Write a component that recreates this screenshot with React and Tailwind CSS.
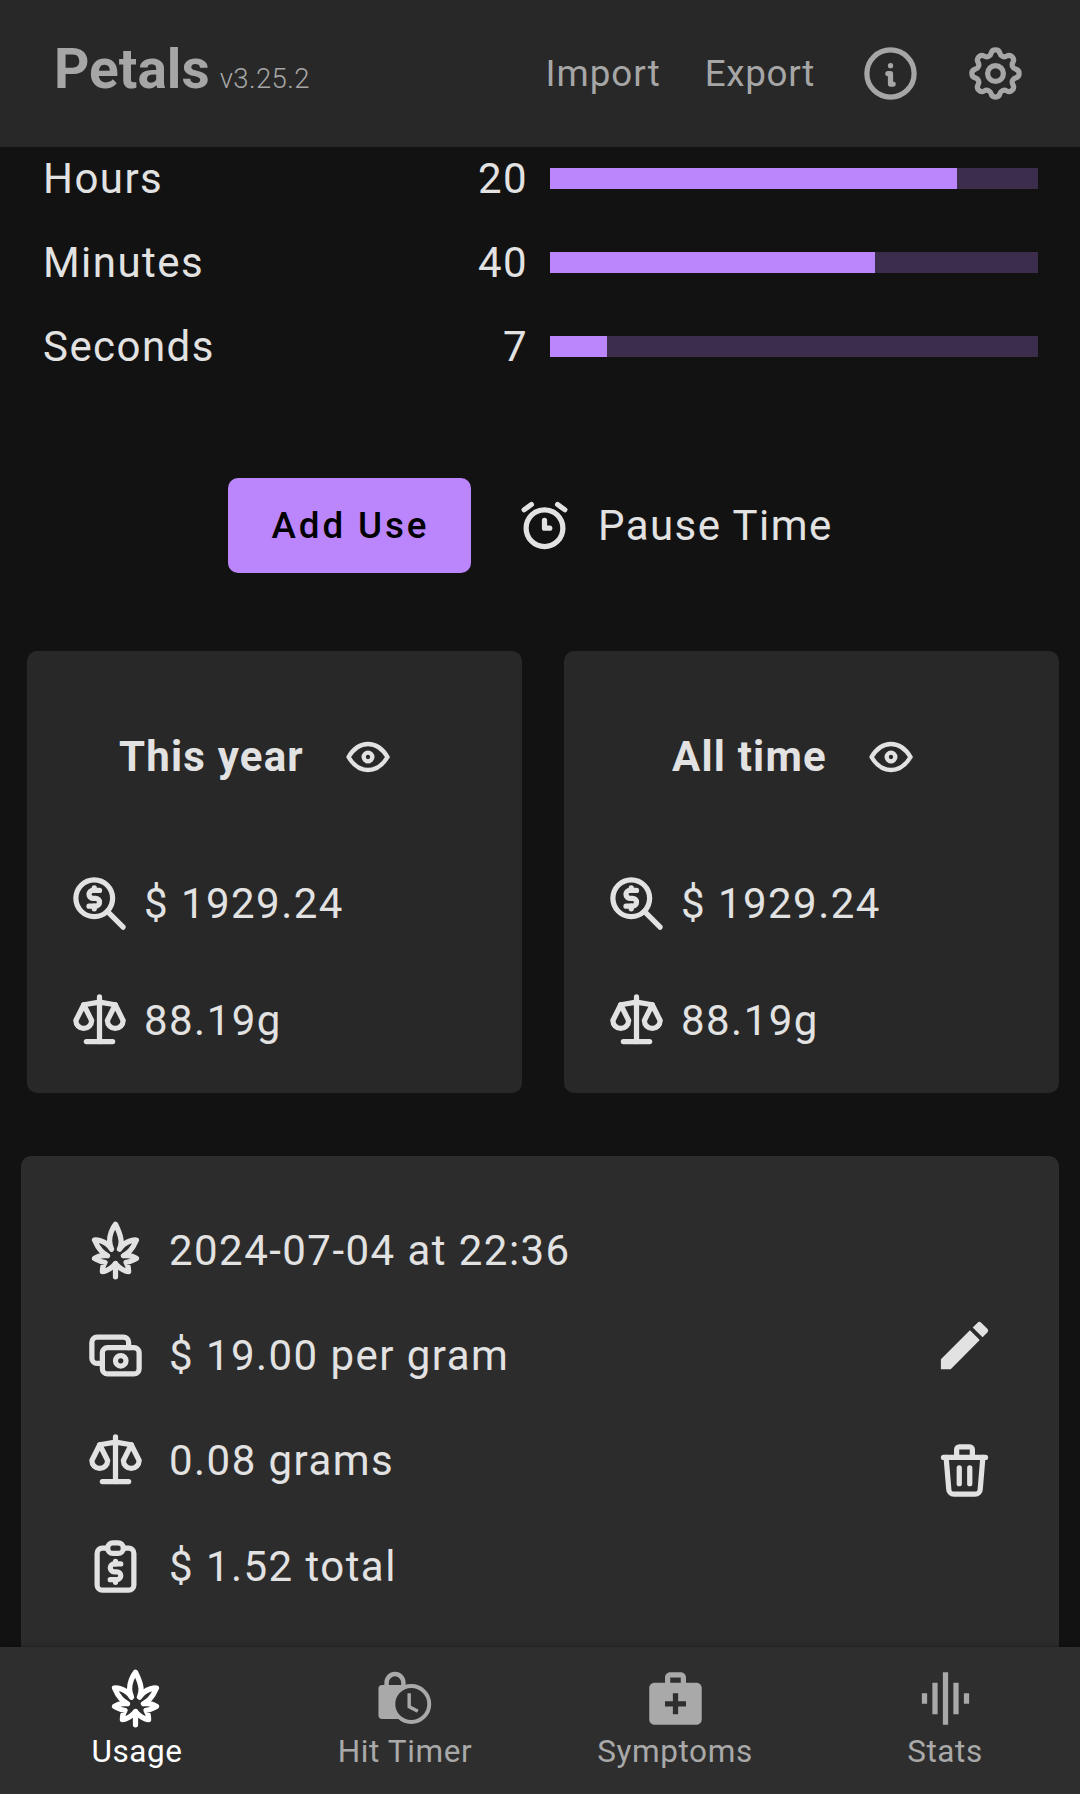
import { TbAlarm, TbCannabis, TbCash, TbEye, TbInfoCircle, TbReportMoney, TbScale, TbSettings, TbTrash, TbZoomMoney } from 'react-icons/tb';
import { MdEdit, MdGraphicEq, MdMedicalServices } from 'react-icons/md';

const bars = [
  { label: 'Hours', value: 20, fill: 'w-[83.3%]' },
  { label: 'Minutes', value: 40, fill: 'w-[66.6%]' },
  { label: 'Seconds', value: 7, fill: 'w-[11.7%]' },
];

// briefcase with a clock over it, not in the icon packages in this shape
const HitTimerIcon = ({ className }) => (
  <svg viewBox="0 0 24 24" className={className}>
    <path d="M4.8 7.5V5.9a3.2 3.2 0 0 1 6.4 0V7.5" fill="none" stroke="currentColor" strokeWidth="1.7" />
    <rect x="1.7" y="6.9" width="13" height="12.9" rx="1.4" fill="currentColor" />
    <circle cx="14.2" cy="14.1" r="6.85" fill="#2e2e2e" stroke="currentColor" strokeWidth="1.5" />
    <path d="M13.4 10v5.1l3.3 1.8" fill="none" stroke="currentColor" strokeWidth="1.3" />
  </svg>
);

const TotalsCard = ({ title, titleClass }) => (
  <div className="h-[442px] w-[495px] rounded-[10px] bg-[#282828]">
    <div className={`flex h-[194px] items-center pt-[17px] ${titleClass}`}>
      <span className="font-bold tracking-[1.2px]">{title}</span>
      <TbEye className="ml-[38px] text-[52px]" />
    </div>
    <div className="flex h-[117px] items-center pl-[41px]">
      <TbZoomMoney className="text-[63px]" />
      <span className="ml-[13px]">$ 1929.24</span>
    </div>
    <div className="flex h-[117px] items-center pl-[41px]">
      <TbScale className="text-[63px]" />
      <span className="ml-[13px]">88.19g</span>
    </div>
  </div>
);

const UseRow = ({ icon: Icon, children }) => (
  <div className="flex h-[105.2px] items-center">
    <Icon className="text-[63px]" />
    <span className="ml-[22px]">{children}</span>
  </div>
);

const Tab = ({ icon: Icon, label, active }) => (
  <div className={`flex flex-1 flex-col items-center pt-[20px] ${active ? 'text-white' : 'text-[#a9a9a9]'}`}>
    <Icon className="h-[63px] w-[63px]" />
    <span className={`mt-[1px] text-[31.5px] leading-[42px] tracking-[0.6px] ${active ? 'ml-[4px]' : ''}`}>{label}</span>
  </div>
);

export default function App() {
  return (
    <div className="flex h-[1794px] w-[1080px] flex-col overflow-hidden bg-[#121212] font-['Roboto',sans-serif] text-[42px] tracking-[1.45px] text-[#e2e2e2]">
      <header className="flex h-[147px] shrink-0 items-center bg-[#282828] pl-[54px] pr-[53px] text-[#a6a6a6]">
        <span className="mt-[-8px] text-[55px] font-bold tracking-[0px]">Petals</span>
        <span className="ml-[10px] mt-[10px] text-[27.5px] font-light tracking-[0.4px]">v3.25.2</span>
        <span className="ml-auto text-[36.75px] tracking-[1px]">Import</span>
        <span className="ml-[44px] text-[36.75px] tracking-[0.7px]">Export</span>
        <TbInfoCircle className="ml-[44px] text-[63px]" />
        <TbSettings className="ml-[42px] text-[63px]" />
      </header>

      <main className="min-h-0 flex-1 overflow-hidden">
        {bars.map((b) => (
          <div key={b.label} className="flex h-[84px] items-center pl-[43px] pr-[42px] first:mt-[-11px]">
            <span className="flex-1">{b.label}</span>
            <span className="w-[80px] text-right">{b.value}</span>
            <div className="ml-[22px] h-[21px] w-[488px] bg-[#3d2d4d]">
              <div className={`h-full bg-[#bb86fc] ${b.fill}`} />
            </div>
          </div>
        ))}

        <div className="mt-[90px] flex items-center pl-[228px]">
          <button className="h-[95px] w-[243px] rounded-[10px] bg-[#bb86fc] pl-[2px] text-[36.75px] font-medium tracking-[2.9px] text-black">Add Use</button>
          <TbAlarm className="ml-[42px] text-[63px]" />
          <span className="ml-[22px]">Pause Time</span>
        </div>

        <div className="mt-[78px] flex gap-[42px] pl-[27px]">
          <TotalsCard title="This year" titleClass="pl-[92px]" />
          <TotalsCard title="All time" titleClass="pl-[108px]" />
        </div>

        <div className="relative ml-[21px] mt-[63px] h-[600px] w-[1038px] rounded-[10px] bg-[#2c2c2c] pl-[63px] pt-[42px]">
          <UseRow icon={TbCannabis}>2024-07-04 at 22:36</UseRow>
          <UseRow icon={TbCash}>$ 19.00 per gram</UseRow>
          <UseRow icon={TbScale}>0.08 grams</UseRow>
          <UseRow icon={TbReportMoney}>$ 1.52 total</UseRow>
          <div className="absolute right-[63px] top-[158px] flex flex-col items-center gap-[62px]">
            <MdEdit className="text-[63px]" />
            <TbTrash className="text-[63px]" />
          </div>
        </div>
      </main>

      <nav className="relative flex h-[147px] shrink-0 bg-[#2e2e2e] shadow-[0_-2px_5px_rgba(0,0,0,0.2)]">
        <Tab icon={TbCannabis} label="Usage" active />
        <Tab icon={HitTimerIcon} label="Hit Timer" />
        <Tab icon={MdMedicalServices} label="Symptoms" />
        <Tab icon={MdGraphicEq} label="Stats" />
      </nav>
    </div>
  );
}
